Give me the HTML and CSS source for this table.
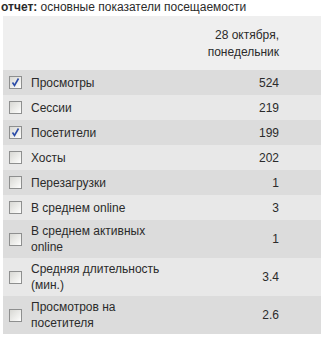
FILE: index.html
```html
<!DOCTYPE html>
<html>
<head>
<meta charset="utf-8">
<link rel="stylesheet" href="styles.css">
</head>
<body>
<div class="title"><b>отчет:</b> основные показатели посещаемости</div>
<table class="report">
  <tr class="head">
    <td class="cb"></td>
    <td class="label"></td>
    <td class="val">28 октября,<br>понедельник</td>
    <td class="pad"></td>
  </tr>
  <tr class="dark">
    <td class="cb"><span class="box checked"><svg viewBox="0 0 13 13" width="13" height="13"><path d="M3.5 6.5 L5.5 9.5 L9.5 2.5" fill="none" stroke="#2a4ba8" stroke-width="1.6"/></svg></span></td>
    <td class="label">Просмотры</td>
    <td class="val">524</td>
    <td class="pad"></td>
  </tr>
  <tr class="light">
    <td class="cb"><span class="box"></span></td>
    <td class="label">Сессии</td>
    <td class="val">219</td>
    <td class="pad"></td>
  </tr>
  <tr class="dark">
    <td class="cb"><span class="box checked"><svg viewBox="0 0 13 13" width="13" height="13"><path d="M3.5 6.5 L5.5 9.5 L9.5 2.5" fill="none" stroke="#2a4ba8" stroke-width="1.6"/></svg></span></td>
    <td class="label">Посетители</td>
    <td class="val">199</td>
    <td class="pad"></td>
  </tr>
  <tr class="light">
    <td class="cb"><span class="box"></span></td>
    <td class="label">Хосты</td>
    <td class="val">202</td>
    <td class="pad"></td>
  </tr>
  <tr class="dark">
    <td class="cb"><span class="box"></span></td>
    <td class="label">Перезагрузки</td>
    <td class="val">1</td>
    <td class="pad"></td>
  </tr>
  <tr class="light">
    <td class="cb"><span class="box"></span></td>
    <td class="label">В среднем online</td>
    <td class="val">3</td>
    <td class="pad"></td>
  </tr>
  <tr class="dark">
    <td class="cb"><span class="box"></span></td>
    <td class="label">В среднем активных<br>online</td>
    <td class="val">1</td>
    <td class="pad"></td>
  </tr>
  <tr class="light">
    <td class="cb"><span class="box"></span></td>
    <td class="label">Средняя длительность<br>(мин.)</td>
    <td class="val">3.4</td>
    <td class="pad"></td>
  </tr>
  <tr class="dark">
    <td class="cb"><span class="box"></span></td>
    <td class="label">Просмотров на<br>посетителя</td>
    <td class="val">2.6</td>
    <td class="pad"></td>
  </tr>
</table>
</body>
</html>
```
FILE: styles.css
```css
html, body {
  margin: 0;
  padding: 0;
  background: #ffffff;
}
body {
  font-family: "Liberation Sans", Arial, sans-serif;
  font-size: 12px;
  color: #2b2b2b;
}
.title {
  height: 16px;
  line-height: 14px;
  padding-left: 1px;
}
.title b {
  font-weight: bold;
}
.report {
  margin-left: 3px;
  width: 318px;
  border-collapse: collapse;
  border-spacing: 0;
  table-layout: fixed;
}
.report td {
  box-sizing: border-box;
  padding: 3px 0;
  line-height: 16px;
  height: 25px;
  vertical-align: middle;
  white-space: nowrap;
}
.report .cb { width: 28px; }
.report .label { width: 150px; }
.report .val { text-align: right; width: 98px; }
.report .pad { width: 42px; }
.head td {
  background: #efefef;
  height: 54px;
  padding: 4px 0 2px 0;
}
.head .val { line-height: 17px; }
.dark td { background: #dcdcdc; }
.light td { background: #e8e8e8; }
.box {
  display: block;
  box-sizing: border-box;
  width: 13px;
  height: 13px;
  margin-left: 6px;
  border: 1px solid #8e8f8f;
  background: linear-gradient(135deg, #d8d8d4 0%, #f4f4f2 75%, #ffffff 100%);
  position: relative;
}
.box svg {
  position: absolute;
  left: -1px;
  top: -1px;
}
```
